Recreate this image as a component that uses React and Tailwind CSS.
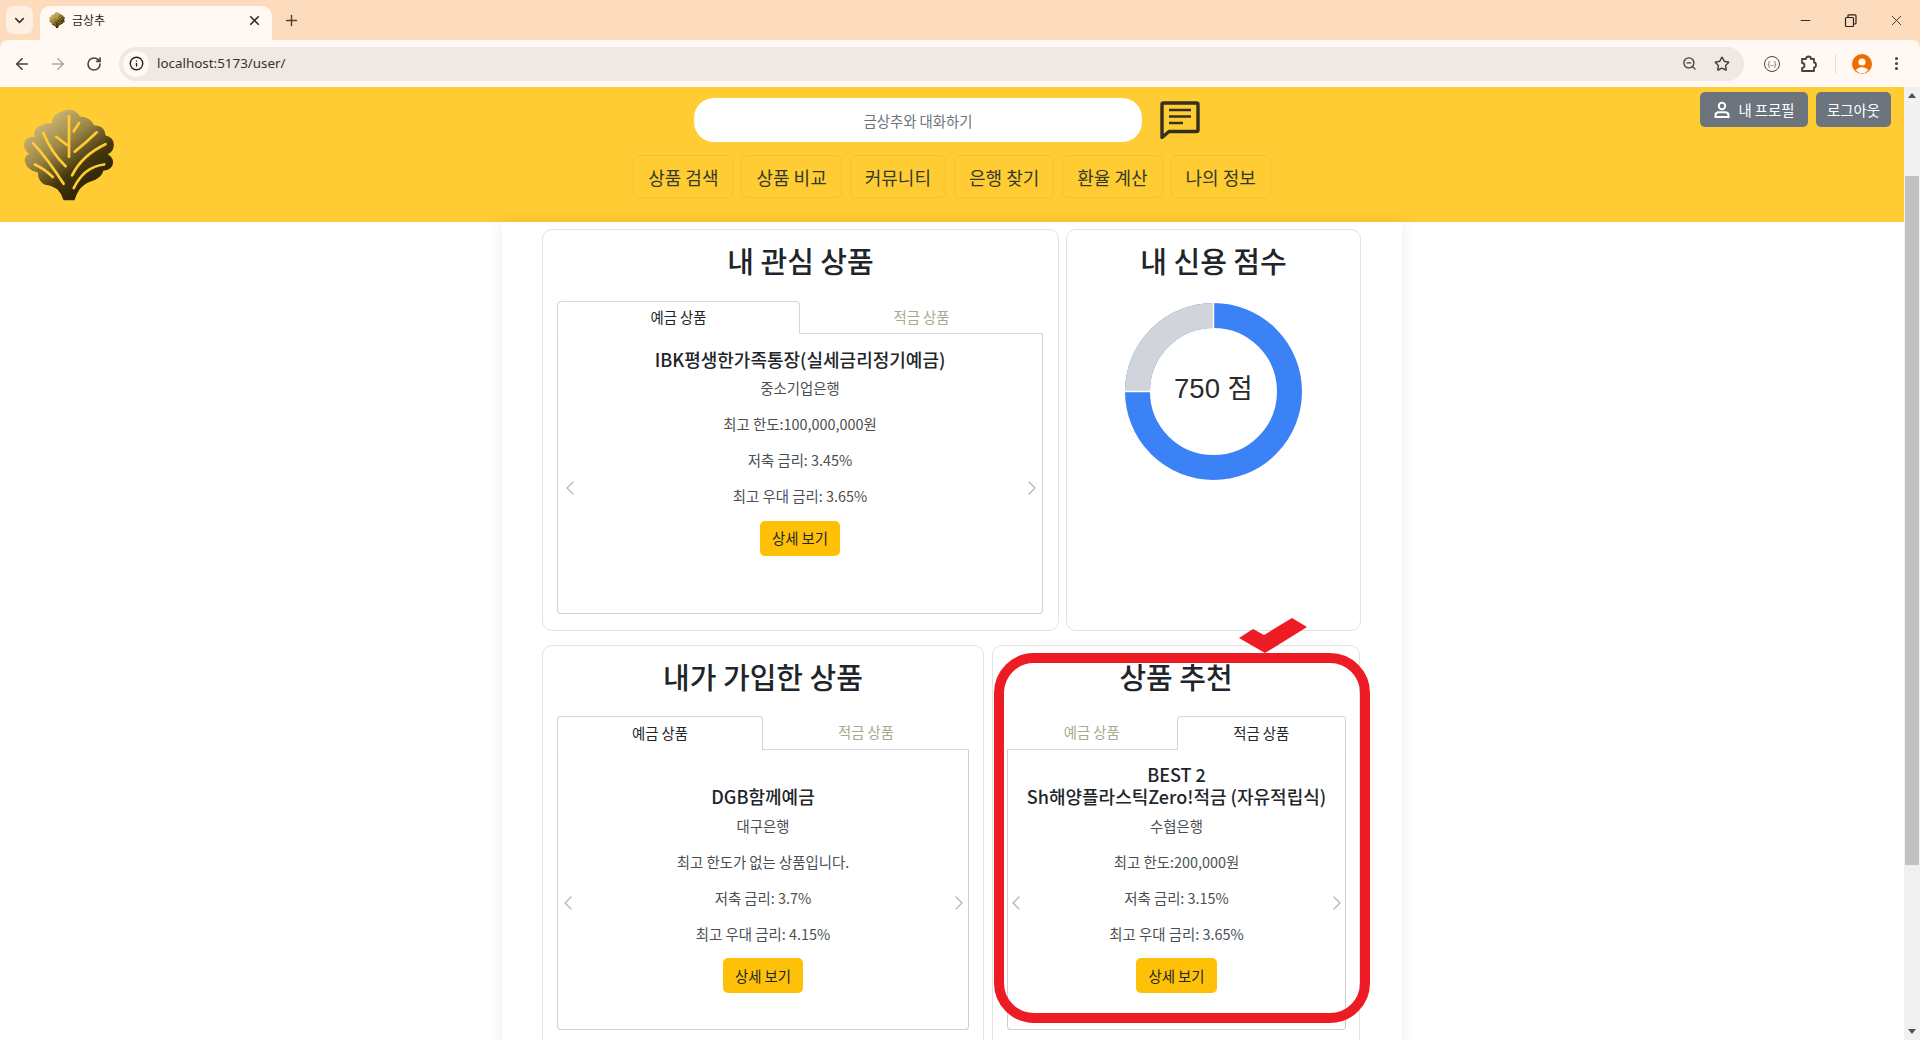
import React from 'react';
import {
  ArrowLeft, ArrowRight, ChevronDown, ChevronLeft, ChevronRight, EllipsisVertical, Info,
  Minus, Plus, RotateCw, Star, X, ZoomOut
} from 'lucide-react';

const NAV_ITEMS = ['상품 검색', '상품 비교', '커뮤니티', '은행 찾기', '환율 계산', '나의 정보'];

const LeafLogo = ({ className, id }) => (
  <svg viewBox="40 44 272 272" className={className}>
    <defs>
      <linearGradient id={id} x1="0.05" y1="0" x2="0.78" y2="1">
        <stop offset="0" stopColor="#e8d294" />
        <stop offset="0.42" stopColor="#9c8646" />
        <stop offset="0.68" stopColor="#46380c" />
        <stop offset="1" stopColor="#1f1800" />
      </linearGradient>
    </defs>
    <path
      fill={`url(#${id})`}
      d="M176 46 Q198 46 208 66 Q240 68 250 92 Q282 92 284 122 Q312 128 308 155 Q306 172 290 178 Q312 190 304 212 Q296 226 278 226 Q272 250 240 258 Q215 268 205 285 Q196 300 192 314 L160 314 Q155 295 142 282 Q125 270 105 268 Q84 258 84 232 Q50 225 45 198 Q44 184 58 176 Q38 160 44 142 Q52 124 75 126 Q68 100 95 92 Q105 86 125 86 Q128 58 155 52 Q165 46 176 46 Z"
    />
    <g fill="none" stroke="#ffcc33" strokeWidth="8" strokeLinecap="round">
      <path d="M176 66 L176 185" />
      <path d="M206 85 L190 110" />
      <path d="M138 126 L170 150" />
      <path d="M100 115 Q125 175 166 213" />
      <path d="M258 113 Q225 145 193 170" />
      <path d="M284 148 Q215 180 185 240" />
      <path d="M70 145 Q115 195 160 265" />
      <path d="M75 208 Q105 222 128 245" />
      <path d="M280 208 Q220 215 190 278" />
    </g>
  </svg>
);

const ChromeBar = () => (
  <div className="h-[87px] shrink-0 bg-[#fddcbd] flex flex-col font-['Noto_Sans','Noto_Sans_CJK_KR',sans-serif]">
    <div className="h-10 shrink-0 flex items-end pl-[6px]">
      <div className="w-[27px] h-[28px] mb-[6px] rounded-lg bg-[#fff0e4] flex items-center justify-center">
        <ChevronDown size={15} strokeWidth={2.5} className="text-[#3c2f26]" />
      </div>
      <div className="ml-[7px] w-[232px] h-[34px] bg-[#fff8f3] rounded-t-[10px] flex items-center pl-[9px] pr-[10px] pb-[6px]">
        <LeafLogo id="favicon-leaf" className="w-4 h-4" />
        <span className="ml-[7px] text-xs text-[#2a211b] font-['Noto_Sans_CJK_KR',sans-serif]">금상추</span>
        <X size={15} strokeWidth={2.5} className="ml-auto text-[#2a211b]" />
      </div>
      <Plus size={17} strokeWidth={2} className="ml-[11px] mb-[11px] text-[#53402f]" />
      <div className="ml-auto flex items-center h-10 pr-[15px] gap-[31px] text-[#2a211b]">
        <Minus size={15} strokeWidth={1.5} />
        <svg width="13" height="13" viewBox="0 0 13 13" fill="none" stroke="currentColor" strokeWidth="1.2">
          <rect x="1.5" y="3.5" width="8" height="9" rx="1" />
          <path d="M4 3.5 V1.5 Q4 .8 4.8 .8 H11 Q12 .8 12 1.8 V9 Q12 10 11 10 H9.5" />
        </svg>
        <X size={17} strokeWidth={1.2} />
      </div>
    </div>
    <div className="h-[47px] shrink-0 bg-[#fff8f3] rounded-t-lg flex items-center pl-[13px] text-[#4d4036]">
      <ArrowLeft size={18} strokeWidth={2.2} />
      <ArrowRight size={18} strokeWidth={2.2} className="ml-[18px] text-[#b3aaa3]" />
      <RotateCw size={16} strokeWidth={2.4} className="ml-[19px]" />
      <div className="ml-[17px] w-[1625px] h-[34px] rounded-full bg-[#f0e8e2] flex items-center pl-1 pr-[14px]">
        <div className="w-[26px] h-[26px] rounded-full bg-[#fff8f3] flex items-center justify-center">
          <Info size={15} strokeWidth={2.2} className="text-[#2a211b]" />
        </div>
        <span className="ml-2 text-[13.4px] text-[#3a3029]">localhost:5173/user/</span>
        <ZoomOut size={15} strokeWidth={2.2} className="ml-auto mr-px text-[#4d4036]" />
        <Star size={16} strokeWidth={2.2} className="ml-4 text-[#4d4036]" />
      </div>
      <div className="ml-5 w-4 h-4 rounded-full border border-[#4d4036] flex items-center justify-center text-[7px] leading-none">{'{..}'}</div>
      <svg width="18" height="18" viewBox="0 0 18 18" fill="none" stroke="currentColor" strokeWidth="1.8" strokeLinejoin="round" className="ml-[19px]">
        <path d="M3 4 H7 Q7 1.5 9.5 1.5 Q12 1.5 12 4 H15 V7.5 Q17 7.5 17 10 Q17 12.5 15 12.5 V16 H3 V13 Q5.5 13 5.5 10.5 Q5.5 8 3 8 Z" />
      </svg>
      <div className="ml-[18px] w-px h-5 bg-[#eadfd6]" />
      <svg width="20" height="20" viewBox="0 0 20 20" className="ml-4">
        <circle cx="10" cy="10" r="10" fill="#ef6c00" />
        <circle cx="10" cy="8" r="3.6" fill="#fff8f3" />
        <path d="M3.5 16 Q10 10 16.5 16 Q10 23 3.5 16 Z" fill="#fff8f3" />
      </svg>
      <EllipsisVertical size={17} strokeWidth={2.4} className="ml-4" />
    </div>
  </div>
);

const TopHeader = () => (
  <header className="h-[135px] shrink-0 bg-[#ffcc33] grid grid-cols-[1fr_auto_1fr]">
    <div className="pl-[23px] pt-[22px]">
      <LeafLogo id="header-leaf" className="w-[92px] h-[92px]" />
    </div>
    <div className="pt-[11px] flex flex-col items-center">
      <div className="flex items-center gap-[18px] pr-[10px]">
        <input
          readOnly
          placeholder="금상추와 대화하기"
          className="w-[448px] h-[44px] rounded-[20px] bg-white text-center text-[14.4px] leading-5 outline-none placeholder:text-[#6c757d]"
        />
        <svg width="40" height="38" viewBox="0 0 40 38" fill="none" className="text-[#33301f]">
          <path d="M3.5 2 H36.5 Q38 2 38 3.5 V29 Q38 30.5 36.5 30.5 H9 L2 36.5 V3.5 Q2 2 3.5 2 Z" stroke="currentColor" strokeWidth="3.4" strokeLinejoin="round" />
          <path d="M9 9 H31 M9 15.5 H31 M9 22 H23" stroke="currentColor" strokeWidth="2.6" />
        </svg>
      </div>
      <nav className="mt-[13px] flex gap-2">
        {NAV_ITEMS.map((item) => (
          <div key={item} className="h-[43px] px-[14px] rounded-md border border-[#f7c12d] flex items-center text-lg text-[#343a2a] whitespace-nowrap">
            {item}
          </div>
        ))}
      </nav>
    </div>
    <div className="pt-[5px] pr-[13px] flex justify-end items-start gap-2">
      <div className="h-[35px] w-[108px] rounded-[5px] bg-[#6c757d] text-white text-[14.4px] flex items-center justify-center gap-[7px]">
        <svg width="18" height="18" viewBox="0 0 18 18" fill="none" stroke="currentColor" strokeWidth="2">
          <circle cx="9" cy="5" r="3.2" />
          <path d="M2.5 16 V14.2 Q2.5 11.2 6 11.2 H12 Q15.5 11.2 15.5 14.2 V16 Z" />
        </svg>
        <span>내 프로필</span>
      </div>
      <div className="h-[35px] w-[75px] rounded-[5px] bg-[#6c757d] text-white text-[14.4px] flex items-center justify-center">
        로그아웃
      </div>
    </div>
  </header>
);

const ProductTabs = ({ active, tabHeight, topPad, bankGap, buttonGap, leftArrow, rightArrow, lines, bank, limit, rate, bonus }) => {
  const tabs = ['예금 상품', '적금 상품'];
  return (
    <div className="relative text-[14.4px]">
      <div className={`flex ${tabHeight}`}>
        {tabs.map((tab, i) => (
          <div
            key={tab}
            className={
              i === active
                ? 'w-1/2 pb-[2px] border-t border-x border-[#d5d5d5] rounded-t-[4px] flex items-center justify-center text-[#212529]'
                : 'w-1/2 pb-px border-b border-[#d5d5d5] flex items-center justify-center text-[#a9a98d]'
            }
          >
            {tab}
          </div>
        ))}
      </div>
      <div className={`h-[280px] border-x border-b border-[#cfcfcf] rounded-b-[4px] text-center text-[#4a4f54] ${topPad}`}>
        <div className="text-lg font-medium leading-[21.6px] text-[#212529]">
          {lines.map((line) => (
            <div key={line}>{line}</div>
          ))}
        </div>
        <p className={`${bankGap} mb-4 leading-5`}>{bank}</p>
        <p className="mb-4 leading-5">{limit}</p>
        <p className="mb-4 leading-5">{rate}</p>
        <p className={`${buttonGap} leading-5`}>{bonus}</p>
        <div className="mx-auto w-fit h-[35px] px-3 rounded-[5px] bg-[#ffc107] text-[#212529] flex items-center">상세 보기</div>
      </div>
      <ChevronLeft size={24} strokeWidth={1.3} className={`absolute top-[175px] text-[#b5b5b5] ${leftArrow}`} />
      <ChevronRight size={24} strokeWidth={1.3} className={`absolute top-[175px] text-[#b5b5b5] ${rightArrow}`} />
    </div>
  );
};

const Card = ({ title, width, height, children }) => (
  <section className={`${width} ${height} shrink-0 rounded-[10px] border border-[#e2e2e2] px-[14px] pt-[13px]`}>
    <h2 className="mb-6 text-center text-[29px] leading-[34px] font-medium text-[#212529]">{title}</h2>
    {children}
  </section>
);

const CreditDonut = () => (
  <div className="relative mx-auto w-[177px] h-[177px]">
    <svg viewBox="0 0 177 177" className="w-full h-full">
      <circle cx="88.5" cy="88.5" r="76" fill="none" stroke="#3b82f6" strokeWidth="25" />
      <path d="M88.5 12.5 A76 76 0 0 0 12.5 88.5" fill="none" stroke="#d1d5db" strokeWidth="25" />
      <path d="M88.5 0 V26 M0 88.5 H26" stroke="#ffffff" strokeWidth="1.5" />
    </svg>
    <div className="absolute inset-0 flex items-center justify-center text-[27.5px] text-[#2b2b2b] font-['Liberation_Sans','Noto_Sans_CJK_KR',sans-serif] -translate-y-[3px]">
      750 점
    </div>
  </div>
);

const Scrollbar = () => (
  <div className="w-4 shrink-0 bg-[#f1f1f1] flex flex-col items-center relative">
    <div className="h-[17px] flex items-center justify-center">
      <div className="w-0 h-0 border-x-4 border-x-transparent border-b-[5px] border-b-[#505050]" />
    </div>
    <div className="mt-[72px] w-[14px] h-[689px] bg-[#c1c1c1]" />
    <div className="mt-auto h-[17px] flex items-center justify-center">
      <div className="w-0 h-0 border-x-4 border-x-transparent border-t-[5px] border-t-[#505050]" />
    </div>
  </div>
);

const App = () => (
  <div className="relative w-full h-[1040px] overflow-hidden flex flex-col bg-white font-['Noto_Sans_CJK_KR','Noto_Sans',sans-serif]">
    <ChromeBar />
    <div className="flex-1 min-h-0 flex">
      <div className="flex-1 min-w-0 flex flex-col overflow-hidden">
        <TopHeader />
        <main className="mx-auto w-[900px] flex-1 bg-white px-10 pt-[7px] shadow-[0_0_12px_rgba(0,0,0,0.08)]">
          <div className="flex gap-[7px]">
            <Card title="내 관심 상품" width="w-[517px]" height="h-[402px]">
              <div className="mr-px">
                <ProductTabs
                  active={0}
                  tabHeight="h-[33px]"
                  topPad="pt-[15px]"
                  bankGap="mt-[7.5px]"
                  buttonGap="mb-[14.5px]"
                  leftArrow="left-[1px]"
                  rightArrow="right-[-1px]"
                  lines={['IBK평생한가족통장(실세금리정기예금)']}
                  bank="중소기업은행"
                  limit="최고 한도:100,000,000원"
                  rate="저축 금리: 3.45%"
                  bonus="최고 우대 금리: 3.65%"
                />
              </div>
            </Card>
            <Card title="내 신용 점수" width="w-[295px]" height="h-[402px]">
              <div className="pt-[2px]">
                <CreditDonut />
              </div>
            </Card>
          </div>
          <div className="mt-[14px] flex gap-2">
            <Card title="내가 가입한 상품" width="w-[442px]" height="h-[420px]">
              <div className="-mt-px">
                <ProductTabs
                  active={0}
                  tabHeight="h-[34px]"
                  topPad="pt-[36px]"
                  bankGap="mt-2"
                  buttonGap="mb-[14.5px]"
                  leftArrow="left-[-1px]"
                  rightArrow="right-[-2px]"
                  lines={['DGB함께예금']}
                  bank="대구은행"
                  limit="최고 한도가 없는 상품입니다."
                  rate="저축 금리: 3.7%"
                  bonus="최고 우대 금리: 4.15%"
                />
              </div>
            </Card>
            <Card title="상품 추천" width="w-[368px]" height="h-[420px]">
              <div className="-mt-px -mr-px">
                <ProductTabs
                  active={1}
                  tabHeight="h-[34px]"
                  topPad="pt-[14.4px]"
                  bankGap="mt-2"
                  buttonGap="mb-[14.5px]"
                  leftArrow="left-[-3px]"
                  rightArrow="right-[-3px]"
                  lines={['BEST 2', 'Sh해양플라스틱Zero!적금 (자유적립식)']}
                  bank="수협은행"
                  limit="최고 한도:200,000원"
                  rate="저축 금리: 3.15%"
                  bonus="최고 우대 금리: 3.65%"
                />
              </div>
            </Card>
          </div>
        </main>
      </div>
      <Scrollbar />
    </div>

    {/* red markup drawn on top of the capture */}
    <div className="absolute left-[994px] top-[653px] w-[376px] h-[370px] rounded-[40px] border-[10px] border-[#ed1c24]" />
    <svg className="absolute left-[1239px] top-[618px]" width="68" height="36" viewBox="0 0 68 36">
      <polygon points="0,20 14,11 25,17 53,0 68,9 26,35" fill="#ed1c24" />
    </svg>
  </div>
);

export default App;
